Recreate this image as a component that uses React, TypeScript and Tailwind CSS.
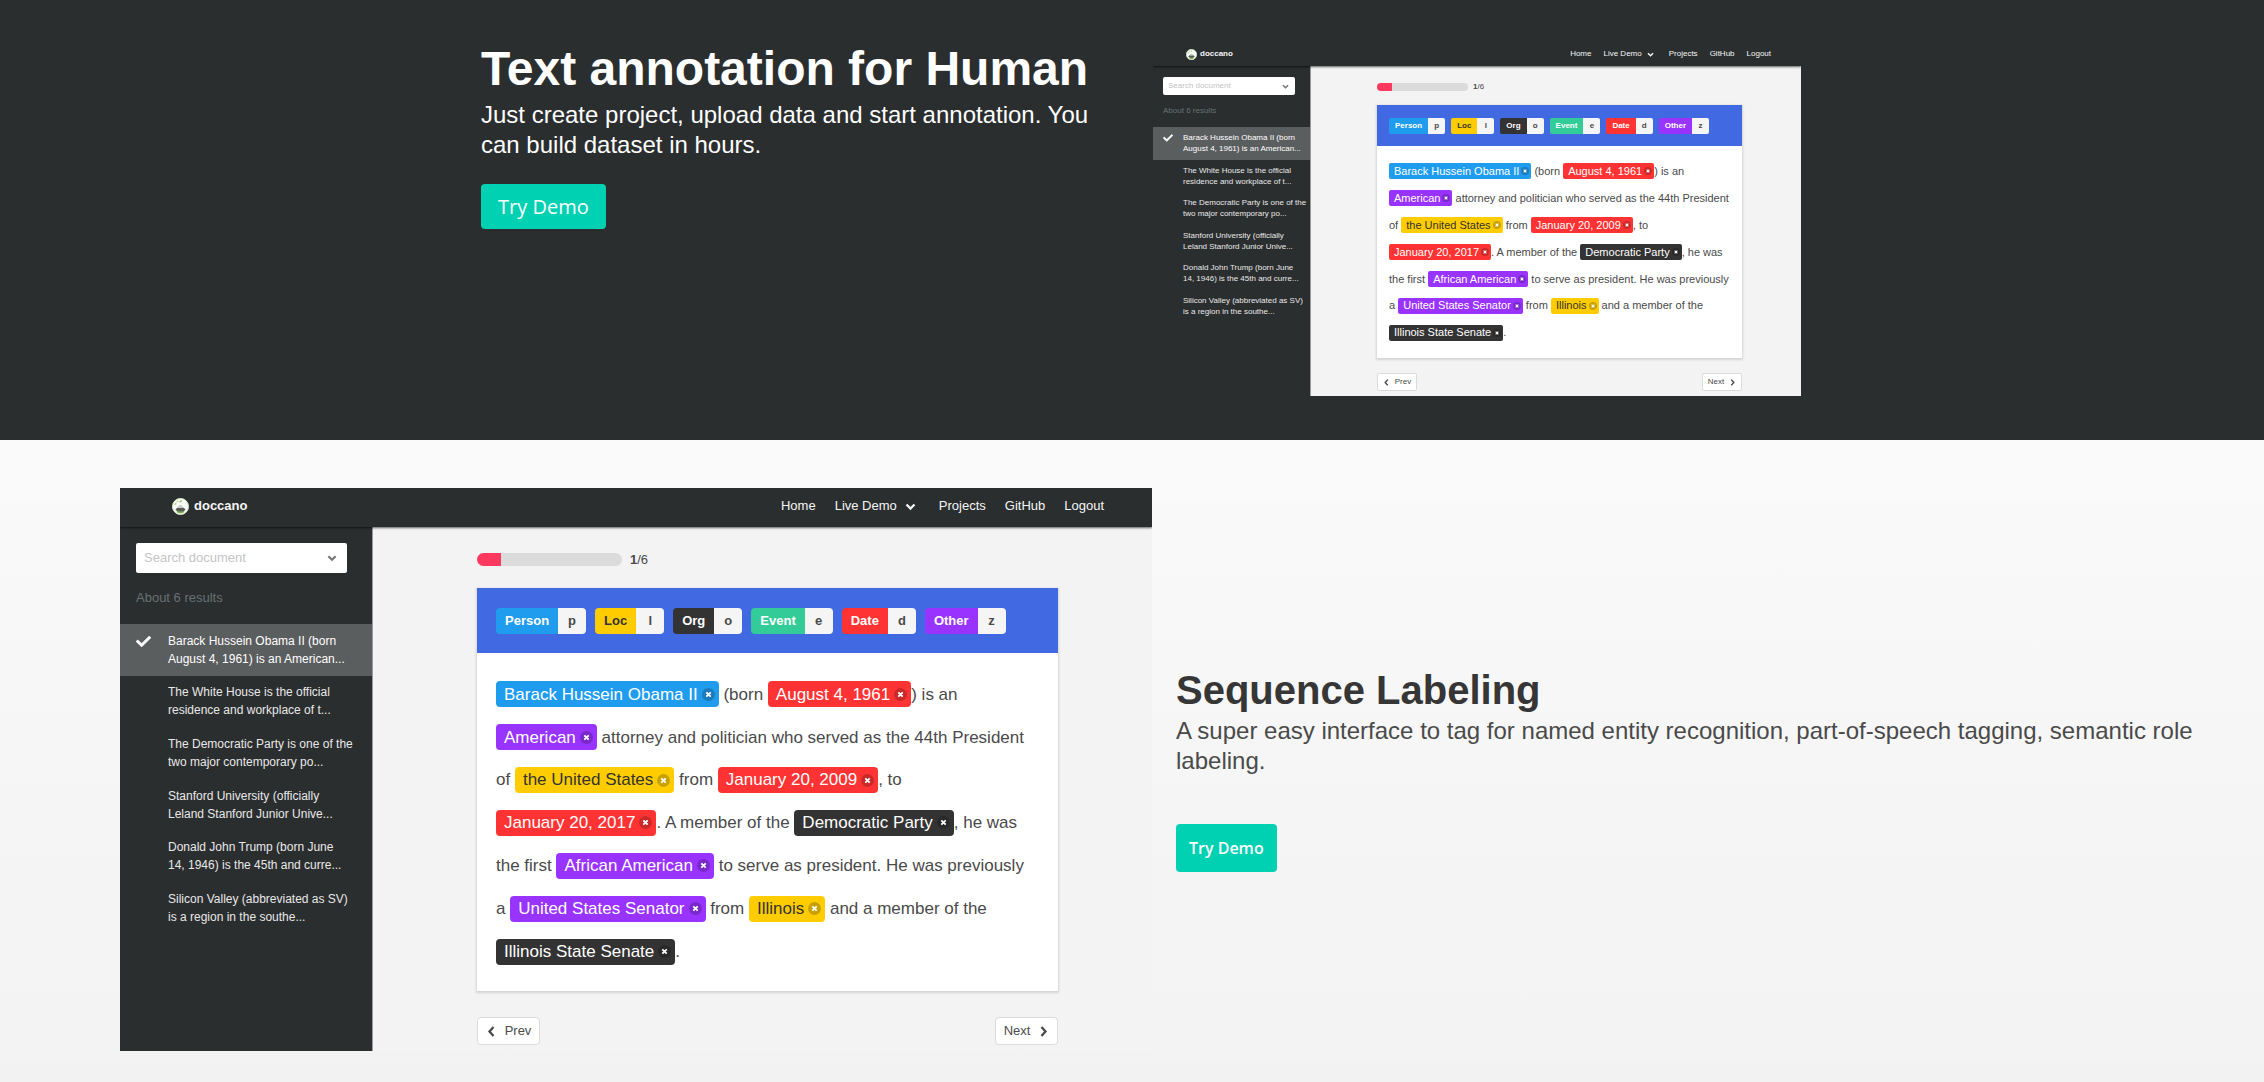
import React from "react";
import { FaCheck } from "react-icons/fa";

type Size = "lg" | "sm";
type Label = "person" | "loc" | "org" | "event" | "date" | "other";

const labelColor: Record<Label, string> = {
  person: "bg-[#209cee] text-white",
  loc: "bg-[#ffcc00] text-[#333333]",
  org: "bg-[#333333] text-white",
  event: "bg-[#33cc99] text-white",
  date: "bg-[#ff3333] text-white",
  other: "bg-[#9933ff] text-white",
};

const labels: { name: string; key: string; kind: Label }[] = [
  { name: "Person", key: "p", kind: "person" },
  { name: "Loc", key: "l", kind: "loc" },
  { name: "Org", key: "o", kind: "org" },
  { name: "Event", key: "e", kind: "event" },
  { name: "Date", key: "d", kind: "date" },
  { name: "Other", key: "z", kind: "other" },
];

const documents = [
  ["Barack Hussein Obama II (born", "August 4, 1961) is an American..."],
  ["The White House is the official", "residence and workplace of t..."],
  ["The Democratic Party is one of the", "two major contemporary po..."],
  ["Stanford University (officially", "Leland Stanford Junior Unive..."],
  ["Donald John Trump (born June", "14, 1946) is the 45th and curre..."],
  ["Silicon Valley (abbreviated as SV)", "is a region in the southe..."],
];

type Piece = string | { text: string; kind: Label };

const lines: Piece[][] = [
  [{ text: "Barack Hussein Obama II", kind: "person" }, " (born ", { text: "August 4, 1961", kind: "date" }, ") is an"],
  [{ text: "American", kind: "other" }, " attorney and politician who served as the 44th President"],
  ["of ", { text: "the United States", kind: "loc" }, " from ", { text: "January 20, 2009", kind: "date" }, ", to"],
  [{ text: "January 20, 2017", kind: "date" }, ". A member of the ", { text: "Democratic Party", kind: "org" }, ", he was"],
  ["the first ", { text: "African American", kind: "other" }, " to serve as president. He was previously"],
  ["a ", { text: "United States Senator", kind: "other" }, " from ", { text: "Illinois", kind: "loc" }, " and a member of the"],
  [{ text: "Illinois State Senate", kind: "org" }, "."],
];

const styles = {
  lg: {
    header: "h-[39px] pl-[52px] pr-12 pb-[3px] text-[13px]",
    logo: "size-[17px]",
    brand: "gap-[5px]",
    nav: "gap-[19px]",
    navDrop: "gap-2 pr-1",
    navIcon: "size-[11px]",
    body: "h-[524px]",
    side: "w-[253px] text-xs",
    search: "mx-4 mt-4 h-[30px] w-[211px]",
    searchInput: "pl-2 text-[13px]",
    searchIcon: "size-[10px] right-[10px]",
    about: "mx-4 mt-[15px] h-5 text-[13px]",
    list: "mt-[16px] h-[310px]",
    item: "pl-4 leading-[18px]",
    check: "w-8 h-[18px] mt-2",
    checkIcon: "size-[15px]",
    main: "pl-[104px] pr-[94px]",
    progress: "mt-[26px] h-[13px] gap-2 text-[13px]",
    bar: "w-[145px] h-[13px]",
    card: "mt-[22px]",
    labels: "h-[65px] gap-[9px] px-[19px]",
    label: "h-[26px] text-[13px] rounded",
    labelName: "px-[9px]",
    labelKey: "w-[28px]",
    text: "h-[338px] px-[19px] pt-5 text-[17px]",
    lines: "h-[300px]",
    tag: "h-[26px] rounded pl-2 pr-1 gap-1",
    close: "size-[13px]",
    pager: "mt-[26px]",
    pagerButton: "h-[28px] w-[63px] rounded text-[13px] gap-2",
    pagerIcon: "size-[11px]",
  },
  sm: {
    header: "h-[24px] pl-[33px] pr-[30px] text-[8px]",
    logo: "size-[11px]",
    brand: "gap-[3px]",
    nav: "gap-3",
    navDrop: "gap-[5px] pr-[3px]",
    navIcon: "size-[7px]",
    body: "h-[330px]",
    side: "w-[158px] text-[8px]",
    search: "mx-[10px] mt-[11px] h-[18px] w-[132px]",
    searchInput: "pl-[5px] text-[8px]",
    searchIcon: "size-[7px] right-[6px]",
    about: "mx-[10px] mt-[10px] h-3 text-[8px]",
    list: "mt-[10px] h-[195px]",
    item: "pl-[10px] leading-[11px]",
    check: "w-5 h-[11px] mt-[5px]",
    checkIcon: "size-[10px]",
    main: "pl-[66px] pr-[59px]",
    progress: "mt-[17px] h-2 gap-[5px] text-[8px]",
    bar: "w-[91px] h-2",
    card: "mt-[14px]",
    labels: "h-[41px] gap-[6px] px-3",
    label: "h-4 text-[8px] rounded-xs",
    labelName: "px-[6px]",
    labelKey: "w-[17px]",
    text: "h-[212px] px-3 pt-3 text-[11px]",
    lines: "h-[188px]",
    tag: "h-4 rounded-xs pl-[5px] pr-[2px] gap-[2px]",
    close: "size-2",
    pager: "mt-[15px]",
    pagerButton: "h-[18px] w-10 rounded-xs text-[8px] gap-[5px]",
    pagerIcon: "size-[7px]",
  },
};

const chevronPaths = {
  down: "M1.5 3.5L5.5 7.5L9.5 3.5",
  left: "M7.5 1L3.5 5.5L7.5 10",
  right: "M3.5 1L7.5 5.5L3.5 10",
};

function Chevron({ to, className }: { to: "down" | "left" | "right"; className: string }) {
  return (
    <svg viewBox="0 0 11 11" className={className} fill="none" stroke="currentColor" strokeWidth="2.3" aria-hidden="true">
      <path d={chevronPaths[to]} />
    </svg>
  );
}

function Logo({ className }: { className: string }) {
  return (
    <svg viewBox="0 0 34 34" className={className} aria-hidden="true">
      <circle cx="17" cy="17" r="16" fill="#fcfdfa" stroke="#dcebc8" strokeWidth="2" />
      <path d="M9 28a14 14 0 0 0 16 0l-2-4H11z" fill="#7fae52" />
      <path d="M7 24q1-4 5-5h10q4 1 5 5-4 3-10 3T7 24z" fill="#565c55" />
      <path d="M12 19q0-5 5-5t5 5q-5 2-10 0z" fill="#c9cec6" />
      <path d="M5 14q0-4 4-5 0 5-4 5zM14 9q1-5 6-5 0 5-6 5zM9 9q0-3 3-4 0 4-3 4z" fill="#8cc653" />
    </svg>
  );
}

function Tag({ text, kind, size }: { text: string; kind: Label; size: Size }) {
  const s = styles[size];
  return (
    <span className={`inline-flex shrink-0 items-center ${s.tag} ${labelColor[kind]}`}>
      {text}
      <button type="button" aria-label={`Remove ${text}`} className="flex items-center">
        <svg viewBox="0 0 13 13" className={s.close} aria-hidden="true">
          <circle cx="6.5" cy="6.5" r="6.5" fill="#0a0a0a" fillOpacity="0.22" />
          <path d="M4.3 4.3l4.4 4.4m0-4.4l-4.4 4.4" stroke="#fff" strokeWidth="1.8" />
        </svg>
      </button>
    </span>
  );
}

function Demo({ size }: { size: Size }) {
  const s = styles[size];
  return (
    <div className="w-full overflow-hidden bg-[#f3f3f3] text-[#4a4a4a]">
      <header className={`relative flex items-center justify-between bg-[#2b2e2f] text-[#f5f5f5] shadow-[0_1px_2px_rgba(0,0,0,0.6)] ${s.header}`}>
        <a href="#home" className={`flex items-center font-bold ${s.brand}`}>
          <Logo className={s.logo} />
          doccano
        </a>
        <nav className={`flex items-center ${s.nav}`}>
          <a href="#home">Home</a>
          <a href="#demo" className={`flex items-center ${s.navDrop}`}>
            Live Demo
            <Chevron to="down" className={s.navIcon} />
          </a>
          <a href="#projects">Projects</a>
          <a href="#github">GitHub</a>
          <a href="#logout">Logout</a>
        </nav>
      </header>
      <div className={`flex ${s.body}`}>
        <aside className={`shrink-0 border-r border-[#9a9a9a] bg-[#2b2e2f] text-[#e8e8e8] ${s.side}`}>
          <div className={`relative flex items-center rounded-xs bg-white ${s.search}`}>
            <input
              type="text"
              aria-label="Search document"
              placeholder="Search document"
              className={`w-full bg-transparent text-[#4a4a4a] outline-none placeholder:text-[#c4c4c4] ${s.searchInput}`}
            />
            <Chevron to="down" className={`absolute text-[#757575] ${s.searchIcon}`} />
          </div>
          <p className={`flex items-center text-[#677173] ${s.about}`}>About 6 results</p>
          <ul className={`grid grid-rows-6 ${s.list}`}>
            {documents.map((doc, i) => (
              <li key={doc[0]} className={`flex items-center whitespace-nowrap ${s.item} ${i === 0 ? "bg-[#5b5e5f] text-white" : ""}`}>
                <span className={`flex shrink-0 items-center self-start ${s.check}`}>{i === 0 && <FaCheck className={s.checkIcon} />}</span>
                <a href="#document">
                  {doc[0]}
                  <br />
                  {doc[1]}
                </a>
              </li>
            ))}
          </ul>
        </aside>
        <div className={`min-w-0 flex-1 ${s.main}`}>
          <div className={`flex items-center ${s.progress}`}>
            <div className={`overflow-hidden rounded-full bg-[#dbdbdb] ${s.bar}`}>
              <div className="h-full w-1/6 bg-[#ff3860]" />
            </div>
            <span>
              <strong className="font-bold">1</strong>/6
            </span>
          </div>
          <div className={`bg-white shadow-[0_1px_2px_1px_rgba(10,10,10,0.13)] ${s.card}`}>
            <div className={`flex items-center bg-[#4169e1] ${s.labels}`}>
              {labels.map((l) => (
                <button type="button" key={l.name} className={`flex shrink-0 overflow-hidden font-bold ${s.label}`}>
                  <span className={`flex h-full items-center ${s.labelName} ${labelColor[l.kind]}`}>{l.name}</span>
                  <span className={`flex h-full items-center justify-center bg-[#f5f5f5] ${s.labelKey}`}>{l.key}</span>
                </button>
              ))}
            </div>
            <div className={s.text}>
              <div className={`grid grid-rows-7 ${s.lines}`}>
                {lines.map((line, i) => (
                  <p key={i} className="flex items-center whitespace-pre">
                    {line.map((piece, j) =>
                      typeof piece === "string" ? (
                        <span key={j}>{piece}</span>
                      ) : (
                        <Tag key={j} text={piece.text} kind={piece.kind} size={size} />
                      )
                    )}
                  </p>
                ))}
              </div>
            </div>
          </div>
          <div className={`flex justify-between ${s.pager}`}>
            <button type="button" className={`flex items-center justify-center border border-[#dbdbdb] bg-white ${s.pagerButton}`}>
              <Chevron to="left" className={s.pagerIcon} />
              Prev
            </button>
            <button type="button" className={`flex items-center justify-center border border-[#dbdbdb] bg-white ${s.pagerButton}`}>
              Next
              <Chevron to="right" className={s.pagerIcon} />
            </button>
          </div>
        </div>
      </div>
    </div>
  );
}

export default function App() {
  return (
    <div className="min-h-screen bg-[#f3f3f3] font-['Liberation_Sans',Arial,sans-serif] leading-normal">
      <section className="flex min-h-[440px] justify-center bg-[#2b2e2f] pt-[42px]">
        <div className="flex w-full max-w-[1344px] gap-6 pr-[3px] pl-[21px]">
          <div className="min-w-0 flex-1">
            <h1 className="text-5xl leading-[54px] font-bold text-white">Text annotation for Human</h1>
            <p className="mt-1 text-2xl leading-[30px] text-white">
              Just create project, upload data and start annotation. You can build dataset in hours.
            </p>
            <a
              href="#demo"
              className="mt-6 inline-flex h-[45px] items-center rounded bg-[#00d1b2] px-[17px] font-['Open_Sans',sans-serif] text-xl text-white"
            >
              Try Demo
            </a>
          </div>
          <div className="w-[648px] shrink-0">
            <Demo size="sm" />
          </div>
        </div>
      </section>
      <section className="flex items-center gap-6 bg-linear-to-b from-[#fafafa] to-[#f2f2f2] pt-12 pr-12 pb-[31px] pl-[120px]">
        <div className="w-[1032px] shrink-0">
          <Demo size="lg" />
        </div>
        <div className="min-w-0 flex-1">
          <h2 className="mb-[3px] text-[40px] leading-[45px] font-bold text-[#363636]">Sequence Labeling</h2>
          <p className="text-2xl leading-[30px] text-[#4a4a4a]">
            A super easy interface to tag for named entity recognition, part-of-speech tagging, semantic role labeling.
          </p>
          <a
            href="#demo"
            className="mt-12 inline-flex h-12 items-center rounded bg-[#00d1b2] px-[13px] font-['Open_Sans',sans-serif] text-base font-semibold text-white"
          >
            Try Demo
          </a>
        </div>
      </section>
    </div>
  );
}
